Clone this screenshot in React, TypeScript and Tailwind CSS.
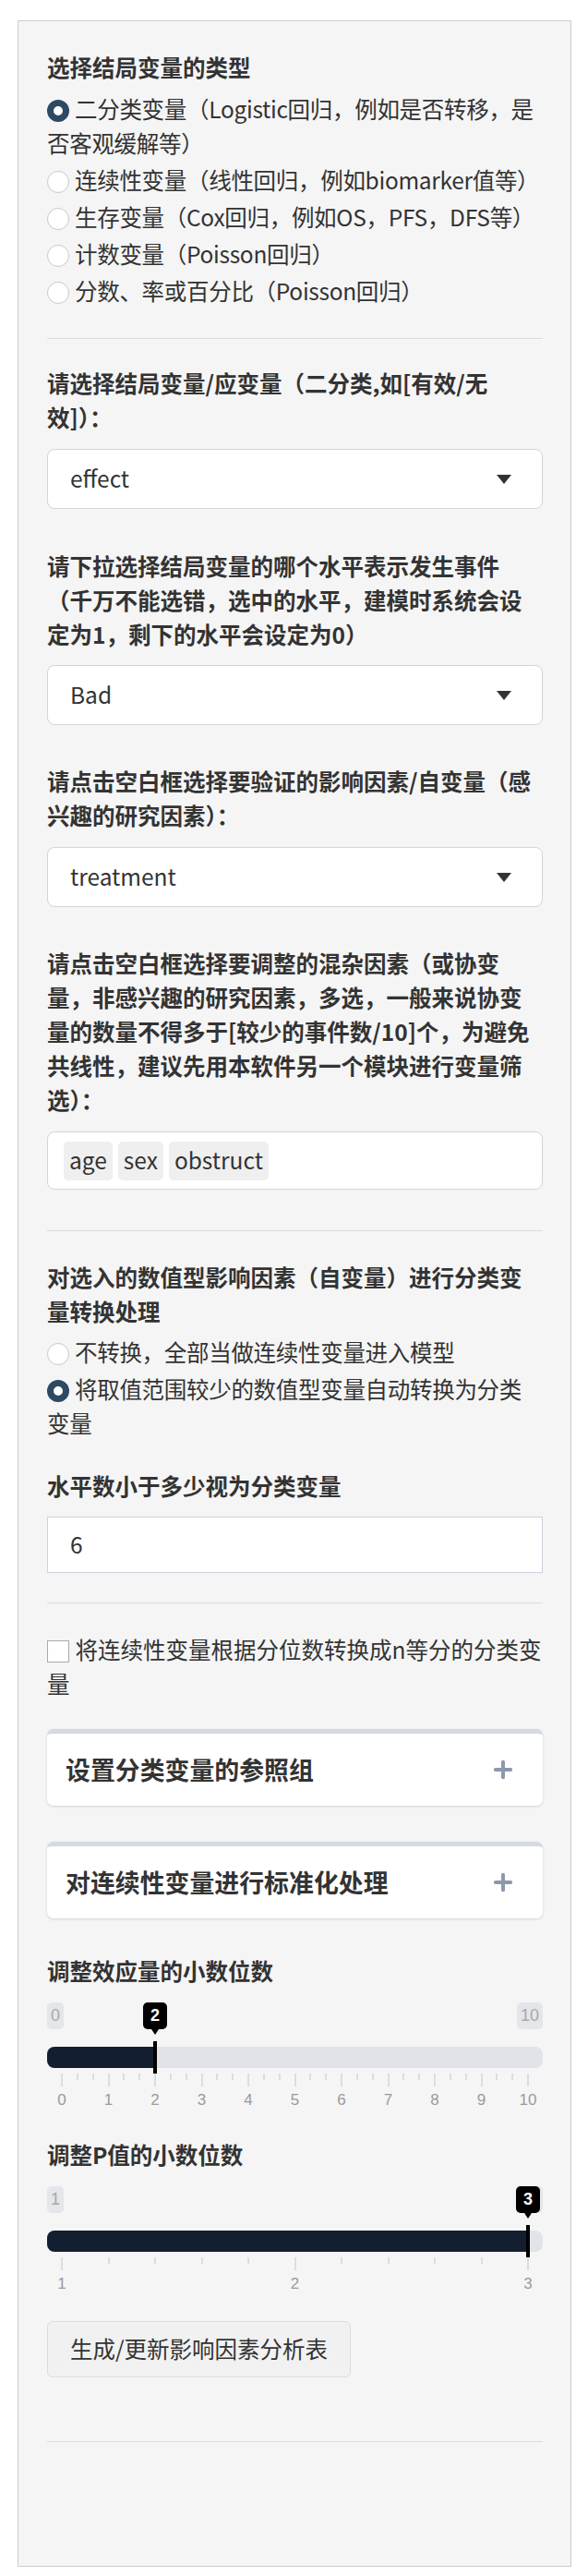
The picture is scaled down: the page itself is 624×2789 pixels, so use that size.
import { Plus } from 'lucide-react';

const outcomeTypes = [
  '二分类变量（Logistic回归，例如是否转移，是否客观缓解等）',
  '连续性变量（线性回归，例如biomarker值等）',
  '生存变量（Cox回归，例如OS，PFS，DFS等）',
  '计数变量（Poisson回归）',
  '分数、率或百分比（Poisson回归）',
];

const convertOptions = ['不转换，全部当做连续性变量进入模型', '将取值范围较少的数值型变量自动转换为分类变量'];

function Radio({ checked, label }: { checked: boolean; label: string }) {
  return (
    <div className="leading-[37px] tracking-[-0.3px]">
      <span
        className={
          checked
            ? 'inline-block w-6 h-6 rounded-full border-[7px] border-[#2d4964] bg-white align-[-4px] mr-[6px]'
            : 'inline-block w-6 h-6 rounded-full border border-[#c9c9c9] bg-white align-[-4px] mr-[6px]'
        }
      />
      {label}
    </div>
  );
}

function Label({ children, className = '' }: { children: React.ReactNode; className?: string }) {
  return <div className={`font-bold leading-[37px] ${className}`}>{children}</div>;
}

function SelectBox({ value, className = '' }: { value: string; className?: string }) {
  return (
    <div className={`h-[65px] bg-white border border-[#d4d4d4] rounded-[8px] flex items-center justify-between pl-6 pr-[33px] ${className}`}>
      <span>{value}</span>
      <span className="w-0 h-0 border-x-[8.5px] border-x-transparent border-t-[10px] border-t-[#333]" />
    </div>
  );
}

function Hr({ className = '' }: { className?: string }) {
  return <div className={`border-t border-[#dcdcdc] ${className}`} />;
}

function AccordionCard({ title, className = '' }: { title: string; className?: string }) {
  return (
    <div className={`h-[83px] bg-white rounded-[7px] border-t-[5px] border-[#d4d9e2] shadow-[0_1px_3px_rgba(0,0,0,0.14)] flex items-center justify-between pl-5 pr-[29px] ${className}`}>
      <span className="font-bold text-[26.9px]">{title}</span>
      <Plus size={28} strokeWidth={3.4} color="#8e97ab" />
    </div>
  );
}

interface SliderProps {
  min: number;
  max: number;
  value: number;
  minors: number;
  className?: string;
}

// grid spans 16px..521px inside the 537px wide block
function Slider({ min, max, value, minors, className = '' }: SliderProps) {
  const pos = (v: number) => 16 + ((v - min) / (max - min)) * 505;
  const majors: number[] = [];
  for (let v = min; v <= max; v++) majors.push(v);
  const ticks: { x: number; major: boolean }[] = [];
  majors.forEach((v, i) => {
    ticks.push({ x: pos(v), major: true });
    if (i < majors.length - 1) {
      for (let k = 1; k < minors; k++) ticks.push({ x: pos(v + k / minors), major: false });
    }
  });
  const thumb = pos(value);

  return (
    <div className={`relative h-[122px] font-['Liberation_Sans',sans-serif] ${className}`}>
      <span className="absolute left-0 top-0 h-[29px] px-[4px] flex items-center rounded-[5px] bg-[#e4e6ea] text-[#a9a9a9] text-[18px]">{min}</span>
      <span className="absolute right-0 top-0 h-[29px] px-[4px] flex items-center rounded-[5px] bg-[#e4e6ea] text-[#a9a9a9] text-[18px]">{max}</span>
      <div className="absolute top-0 -translate-x-1/2 flex flex-col items-center" style={{ left: thumb }}>
        <span className="h-[29px] px-[8px] flex items-center rounded-[5px] bg-black text-white font-bold text-[18px]">{value}</span>
        <span className="w-0 h-0 border-x-[4px] border-x-transparent border-t-[6px] border-t-black" />
      </div>
      <div className="absolute left-0 right-0 top-[48px] h-[23px] rounded-[8px] bg-[#e0e3e8] overflow-hidden">
        <div className="h-full bg-[#131f30]" style={{ width: thumb }} />
      </div>
      <div className="absolute top-[42px] h-[35px] w-[4px] -translate-x-1/2 bg-black" style={{ left: thumb }} />
      {ticks.map((t, i) => (
        <div
          key={i}
          className={t.major ? 'absolute top-[77px] h-[14px] w-[2px] -translate-x-1/2 bg-[#dadde3]' : 'absolute top-[77px] h-[7px] w-[2px] -translate-x-1/2 bg-[#dadde3]'}
          style={{ left: t.x }}
        />
      ))}
      {majors.map(v => (
        <span key={v} className="absolute top-[94px] -translate-x-1/2 text-[17px] leading-[24px] text-[#9a9a9a]" style={{ left: pos(v) }}>
          {v}
        </span>
      ))}
    </div>
  );
}

export default function App() {
  return (
    <div className="bg-white pt-[22px] pl-[19px] text-[#333] text-[24.5px] font-['Noto_Sans_CJK_SC','Noto_Sans',sans-serif]">
      <div className="w-[600px] bg-[#f5f5f5] border border-[#cccccc] pt-[30.5px] pl-[31px] pr-[30px] pb-[134px]">
        <Label>选择结局变量的类型</Label>
        <div className="mt-2 flex flex-col gap-[3px]">
          {outcomeTypes.map((t, i) => (
            <Radio key={t} checked={i === 0} label={t} />
          ))}
        </div>

        <Hr className="mt-[33.5px]" />

        <Label className="mt-[28.5px]">请选择结局变量/应变量（二分类,如[有效/无效]）：</Label>
        <SelectBox value="effect" className="mt-[16.5px]" />

        <Label className="mt-[42.5px]">请下拉选择结局变量的哪个水平表示发生事件（千万不能选错，选中的水平，建模时系统会设定为1，剩下的水平会设定为0）</Label>
        <SelectBox value="Bad" className="mt-[15.5px]" />

        <Label className="mt-[41.5px]">请点击空白框选择要验证的影响因素/自变量（感兴趣的研究因素）：</Label>
        <SelectBox value="treatment" className="mt-[16.5px]" />

        <Label className="mt-[41.5px]">请点击空白框选择要调整的混杂因素（或协变量，非感兴趣的研究因素，多选，一般来说协变量的数量不得多于[较少的事件数/10]个，为避免共线性，建议先用本软件另一个模块进行变量筛选）：</Label>
        <div className="mt-[16.5px] h-[63px] bg-white border border-[#d4d4d4] rounded-[8px] flex items-center gap-[6px] pl-[17px]">
          {['age', 'sex', 'obstruct'].map(c => (
            <span key={c} className="h-[42px] px-[6px] flex items-center rounded-[5px] bg-[#efefef]">
              {c}
            </span>
          ))}
        </div>

        <Hr className="mt-[44px]" />

        <Label className="mt-[30.5px]">对选入的数值型影响因素（自变量）进行分类变量转换处理</Label>
        <div className="mt-[7px] flex flex-col gap-[3px]">
          {convertOptions.map((t, i) => (
            <Radio key={t} checked={i === 1} label={t} />
          ))}
        </div>

        <Label className="mt-[31px]">水平数小于多少视为分类变量</Label>
        <div className="mt-[15.5px] h-[61px] bg-white border border-[#cdd1dc] flex items-center pl-6">6</div>

        <Hr className="mt-[32px]" />

        <div className="mt-[30.5px] leading-[37px]">
          <span className="inline-block w-6 h-6 border border-[#aaaaaa] bg-white align-[-4px] mr-[6.5px]" />
          将连续性变量根据分位数转换成n等分的分类变量
        </div>

        <AccordionCard title="设置分类变量的参照组" className="mt-[31.5px]" />
        <AccordionCard title="对连续性变量进行标准化处理" className="mt-[39px]" />

        <Label className="mt-[37.5px]">调整效应量的小数位数</Label>
        <Slider min={0} max={10} value={2} minors={3} className="mt-[16.5px]" />

        <Label className="mt-[23.5px]">调整P值的小数位数</Label>
        <Slider min={1} max={3} value={3} minors={5} className="mt-[16.5px]" />

        <button className="mt-[24px] h-[61px] w-[329px] bg-[#f1f1f1] border border-[#dcdcdc] rounded-[6px] text-[#333]">
          生成/更新影响因素分析表
        </button>

        <Hr className="mt-[69px]" />
      </div>
    </div>
  );
}
